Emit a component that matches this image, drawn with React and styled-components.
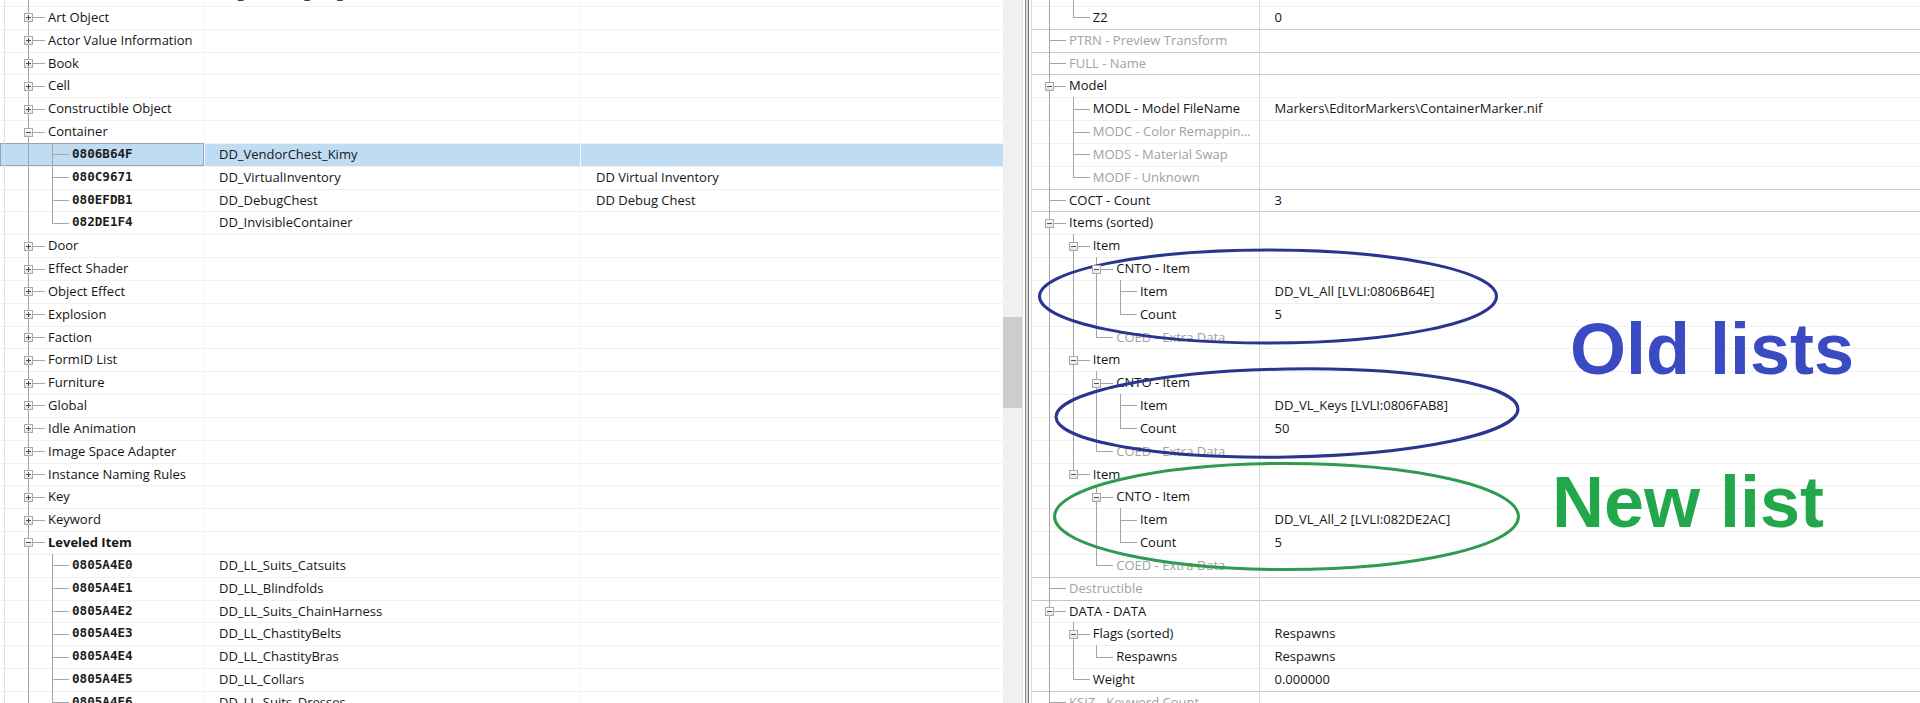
import React from 'react';
import styled, { createGlobalStyle } from 'styled-components';

const ROW = 22.83;

const GlobalStyle = createGlobalStyle`
  html, body {
    margin: 0;
    padding: 0;
    background: #fff;
  }
  body {
    font-family: "Open Sans", "Noto Sans", sans-serif;
    font-size: 13px;
    color: #111;
  }
`;

const Screen = styled.div`
  position: relative;
  display: flex;
  width: 1920px;
  height: 703px;
  overflow: hidden;
  background: #fff;
`;

/* ---------- left: record tree ---------- */

const RecordPane = styled.div`
  display: flex;
  flex: none;
  width: 1023px;
  height: 100%;
`;

const RecordList = styled.div`
  flex: 1;
  display: flex;
  flex-direction: column;
  margin-top: -16.83px;
`;

const ListRow = styled.div`
  display: flex;
  flex: none;
  height: ${ROW}px;
  box-shadow: inset 0 1px 0 #f1f1f1;
  background: ${p => (p.$selected ? '#c0dcf3' : 'transparent')};
`;

const TreeCell = styled.div`
  display: flex;
  align-items: stretch;
  flex: none;
  width: 204px;
  box-sizing: border-box;
  outline: ${p => (p.$focus ? '1px solid #93a6b8' : 'none')};
  outline-offset: -1px;
`;

const TextCell = styled.div`
  flex: none;
  width: ${p => p.$w}px;
  box-sizing: border-box;
  padding-left: ${p => p.$pad}px;
  line-height: ${ROW}px;
  white-space: nowrap;
  color: #161616;
  box-shadow: inset 1px 0 0 #f8f8f8;
`;

const Guide = styled.span`
  position: relative;
  flex: none;
  width: ${p => p.$w}px;
  &::before {
    content: '';
    display: ${p => (p.$line ? 'block' : 'none')};
    position: absolute;
    left: ${p => p.$x}px;
    top: 0;
    bottom: 0;
    border-left: 1px solid ${p => (p.$faint ? '#e2e2e2' : '#a5a5a5')};
  }
`;

const Joint = styled.span`
  position: relative;
  flex: none;
  width: ${p => p.$w}px;
  &::before {
    content: '';
    position: absolute;
    left: ${p => p.$x}px;
    top: 0;
    bottom: ${p => (p.$last ? '50%' : '0')};
    border-left: 1px solid #a5a5a5;
  }
  &::after {
    content: '';
    position: absolute;
    left: ${p => p.$x}px;
    right: 3px;
    top: 50%;
    border-top: 1px solid #a5a5a5;
  }
`;

/* plus / minus box sitting on the tree line */
const Toggle = styled.span`
  position: absolute;
  z-index: 1;
  left: ${p => p.$x - 4}px;
  top: calc(50% - 4px);
  width: 9px;
  height: 9px;
  box-sizing: border-box;
  border: 1px solid #a9a9a9;
  background: linear-gradient(#ffffff, #e4e4e4);
  &::before {
    content: '';
    position: absolute;
    left: 1px;
    top: 3px;
    width: 5px;
    height: 1px;
    background: #505050;
  }
  &::after {
    content: '';
    display: ${p => (p.$open ? 'none' : 'block')};
    position: absolute;
    left: 3px;
    top: 1px;
    width: 1px;
    height: 5px;
    background: #505050;
  }
`;

const GroupName = styled.span`
  line-height: ${ROW}px;
  white-space: nowrap;
  color: #141414;
  font-weight: ${p => (p.$bold ? 700 : 400)};
`;

const FormId = styled.span`
  line-height: ${ROW}px;
  white-space: nowrap;
  font-family: "DejaVu Sans Mono", "Liberation Mono", monospace;
  font-size: 12.6px;
  font-weight: 700;
  color: #1c1c1c;
`;

const ScrollTrack = styled.div`
  flex: none;
  width: 20px;
  height: 100%;
  box-sizing: border-box;
  padding-top: ${p => p.$offset}px;
  background: #f0f0f0;
  border-right: 1px solid #e2e2e2;
`;

const ScrollThumb = styled.div`
  height: ${p => p.$size}px;
  background: #cdcdcd;
`;

const Splitter = styled.div`
  flex: none;
  width: 8px;
  height: 100%;
  background: linear-gradient(
    to right,
    #ffffff 0 2px,
    #8c8c8c 2px 3px,
    #dadada 3px 5px,
    #707070 5px 6px,
    #ffffff 6px
  );
`;

/* ---------- right: element view ---------- */

const ElementPane = styled.div`
  flex: 1;
  display: flex;
  flex-direction: column;
  height: 100%;
  border-left: 1px solid #d6d6d6;
`;

const ElementList = styled.div`
  display: flex;
  flex-direction: column;
  margin-top: -16.83px;
`;

const ElementRow = styled.div`
  display: flex;
  flex: none;
  height: ${ROW}px;
  box-shadow: inset 0 1px 0 ${p => (p.$strong ? '#c6c6c6' : '#f1f1f1')};
`;

const NameCell = styled.div`
  display: flex;
  align-items: stretch;
  flex: none;
  width: 228px;
  box-sizing: border-box;
  padding-left: 13.5px;
  border-right: 1px solid #dcdcdc;
  overflow: hidden;
`;

const ElementName = styled.span`
  flex: 1;
  min-width: 0;
  padding-right: 4px;
  line-height: ${ROW}px;
  white-space: nowrap;
  overflow: hidden;
  text-overflow: ellipsis;
  color: ${p => (p.$muted ? '#a2a2a2' : '#141414')};
`;

const ValueCell = styled.div`
  flex: 1;
  padding-left: 14.5px;
  line-height: ${ROW}px;
  white-space: nowrap;
  color: #161616;
`;

/* ---------- hand drawn markup ---------- */

const Markup = styled.svg`
  position: absolute;
  left: 0;
  top: 0;
  width: 1920px;
  height: 703px;
  pointer-events: none;
`;

const Callout = styled.div`
  position: absolute;
  left: ${p => p.$x}px;
  top: ${p => p.$y}px;
  font-family: "Liberation Sans", Arial, sans-serif;
  font-weight: 700;
  font-size: 72px;
  line-height: 72px;
  white-space: nowrap;
  color: ${p => p.$color};
`;

const records = [
  { id: '0805FF10', name: 'DD_Restraints_Loot_Chest', last: true },
  { label: 'Art Object' },
  { label: 'Actor Value Information' },
  { label: 'Book' },
  { label: 'Cell' },
  { label: 'Constructible Object' },
  { label: 'Container', open: true },
  { id: '0806B64F', name: 'DD_VendorChest_Kimy', selected: true },
  { id: '080C9671', name: 'DD_VirtualInventory', full: 'DD Virtual Inventory' },
  { id: '080EFDB1', name: 'DD_DebugChest', full: 'DD Debug Chest' },
  { id: '082DE1F4', name: 'DD_InvisibleContainer', last: true },
  { label: 'Door' },
  { label: 'Effect Shader' },
  { label: 'Object Effect' },
  { label: 'Explosion' },
  { label: 'Faction' },
  { label: 'FormID List' },
  { label: 'Furniture' },
  { label: 'Global' },
  { label: 'Idle Animation' },
  { label: 'Image Space Adapter' },
  { label: 'Instance Naming Rules' },
  { label: 'Key' },
  { label: 'Keyword' },
  { label: 'Leveled Item', open: true, bold: true },
  { id: '0805A4E0', name: 'DD_LL_Suits_Catsuits' },
  { id: '0805A4E1', name: 'DD_LL_Blindfolds' },
  { id: '0805A4E2', name: 'DD_LL_Suits_ChainHarness' },
  { id: '0805A4E3', name: 'DD_LL_ChastityBelts' },
  { id: '0805A4E4', name: 'DD_LL_ChastityBras' },
  { id: '0805A4E5', name: 'DD_LL_Collars' },
  { id: '0805A4E6', name: 'DD_LL_Suits_Dresses' },
];

// guides: one flag per ancestor level, true while that level's line runs on
const elements = [
  { guides: [true], label: 'Y2', value: '0' },
  { guides: [true], label: 'Z2', value: '0', last: true },
  { guides: [], label: 'PTRN - Preview Transform', muted: true },
  { guides: [], label: 'FULL - Name', muted: true },
  { guides: [], label: 'Model', open: true },
  { guides: [true], label: 'MODL - Model FileName', value: 'Markers\\EditorMarkers\\ContainerMarker.nif' },
  { guides: [true], label: 'MODC - Color Remapping Index', muted: true },
  { guides: [true], label: 'MODS - Material Swap', muted: true },
  { guides: [true], label: 'MODF - Unknown', muted: true, last: true },
  { guides: [], label: 'COCT - Count', value: '3' },
  { guides: [], label: 'Items (sorted)', open: true },
  { guides: [true], label: 'Item', open: true },
  { guides: [true, true], label: 'CNTO - Item', open: true },
  { guides: [true, true, true], label: 'Item', value: 'DD_VL_All [LVLI:0806B64E]' },
  { guides: [true, true, true], label: 'Count', value: '5', last: true },
  { guides: [true, true], label: 'COED - Extra Data', muted: true, last: true },
  { guides: [true], label: 'Item', open: true },
  { guides: [true, true], label: 'CNTO - Item', open: true },
  { guides: [true, true, true], label: 'Item', value: 'DD_VL_Keys [LVLI:0806FAB8]' },
  { guides: [true, true, true], label: 'Count', value: '50', last: true },
  { guides: [true, true], label: 'COED - Extra Data', muted: true, last: true },
  { guides: [true], label: 'Item', open: true, last: true },
  { guides: [true, false], label: 'CNTO - Item', open: true },
  { guides: [true, false, true], label: 'Item', value: 'DD_VL_All_2 [LVLI:082DE2AC]' },
  { guides: [true, false, true], label: 'Count', value: '5', last: true },
  { guides: [true, false], label: 'COED - Extra Data', muted: true, last: true },
  { guides: [], label: 'Destructible', muted: true },
  { guides: [], label: 'DATA - DATA', open: true },
  { guides: [true], label: 'Flags (sorted)', open: true, value: 'Respawns' },
  { guides: [true, true], label: 'Respawns', value: 'Respawns', last: true },
  { guides: [true], label: 'Weight', value: '0.000000', last: true },
  { guides: [], label: 'KSIZ - Keyword Count', muted: true },
];

const STEP_L = 24;
const STEP_R = 23.6;

function RecordRow({ row }) {
  const child = Boolean(row.id);
  return (
    <ListRow $selected={row.selected}>
      <TreeCell $focus={row.selected}>
        <Guide $w={STEP_L} $x={4} $line $faint />
        {child && <Guide $w={STEP_L} $x={4} $line />}
        <Joint $w={STEP_L} $x={4} $last={row.last}>
          {!child && <Toggle $x={4} $open={row.open} />}
        </Joint>
        {child ? (
          <FormId>{row.id}</FormId>
        ) : (
          <GroupName $bold={row.bold}>{row.label}</GroupName>
        )}
      </TreeCell>
      <TextCell $w={376} $pad={15}>{row.name}</TextCell>
      <TextCell $w={423} $pad={16}>{row.full}</TextCell>
    </ListRow>
  );
}

function ElementLine({ row }) {
  const hasToggle = row.open !== undefined;
  return (
    <ElementRow $strong={row.guides.length === 0}>
      <NameCell>
        {row.guides.map((on, i) => (
          <Guide key={i} $w={STEP_R} $x={3.5} $line={on} />
        ))}
        <Joint $w={STEP_R} $x={3.5} $last={row.last}>
          {hasToggle && <Toggle $x={3.5} $open={row.open} />}
        </Joint>
        <ElementName $muted={row.muted}>{row.label}</ElementName>
      </NameCell>
      <ValueCell>{row.value}</ValueCell>
    </ElementRow>
  );
}

export default function App() {
  return (
    <>
      <GlobalStyle />
      <Screen>
        <RecordPane>
          <RecordList>
            {records.map((row, i) => (
              <RecordRow key={i} row={row} />
            ))}
          </RecordList>
          <ScrollTrack $offset={317}>
            <ScrollThumb $size={91} />
          </ScrollTrack>
        </RecordPane>
        <Splitter />
        <ElementPane>
          <ElementList>
            {elements.map((row, i) => (
              <ElementLine key={i} row={row} />
            ))}
          </ElementList>
        </ElementPane>

        <Markup viewBox="0 0 1920 703">
          <ellipse cx="1268" cy="296.5" rx="228.5" ry="46.5" fill="none" stroke="#2b3590" strokeWidth="3" />
          <ellipse
            cx="1287"
            cy="413"
            rx="231"
            ry="44"
            fill="none"
            stroke="#2b3590"
            strokeWidth="3"
            transform="rotate(-1 1287 413)"
          />
          <ellipse cx="1286.5" cy="516.5" rx="232" ry="53" fill="none" stroke="#2f9b4f" strokeWidth="3" />
        </Markup>
        <Callout $x={1570} $y={312.5} $color="#3a4ac2">Old lists</Callout>
        <Callout $x={1552} $y={465.5} $color="#22a84b">New list</Callout>
      </Screen>
    </>
  );
}
